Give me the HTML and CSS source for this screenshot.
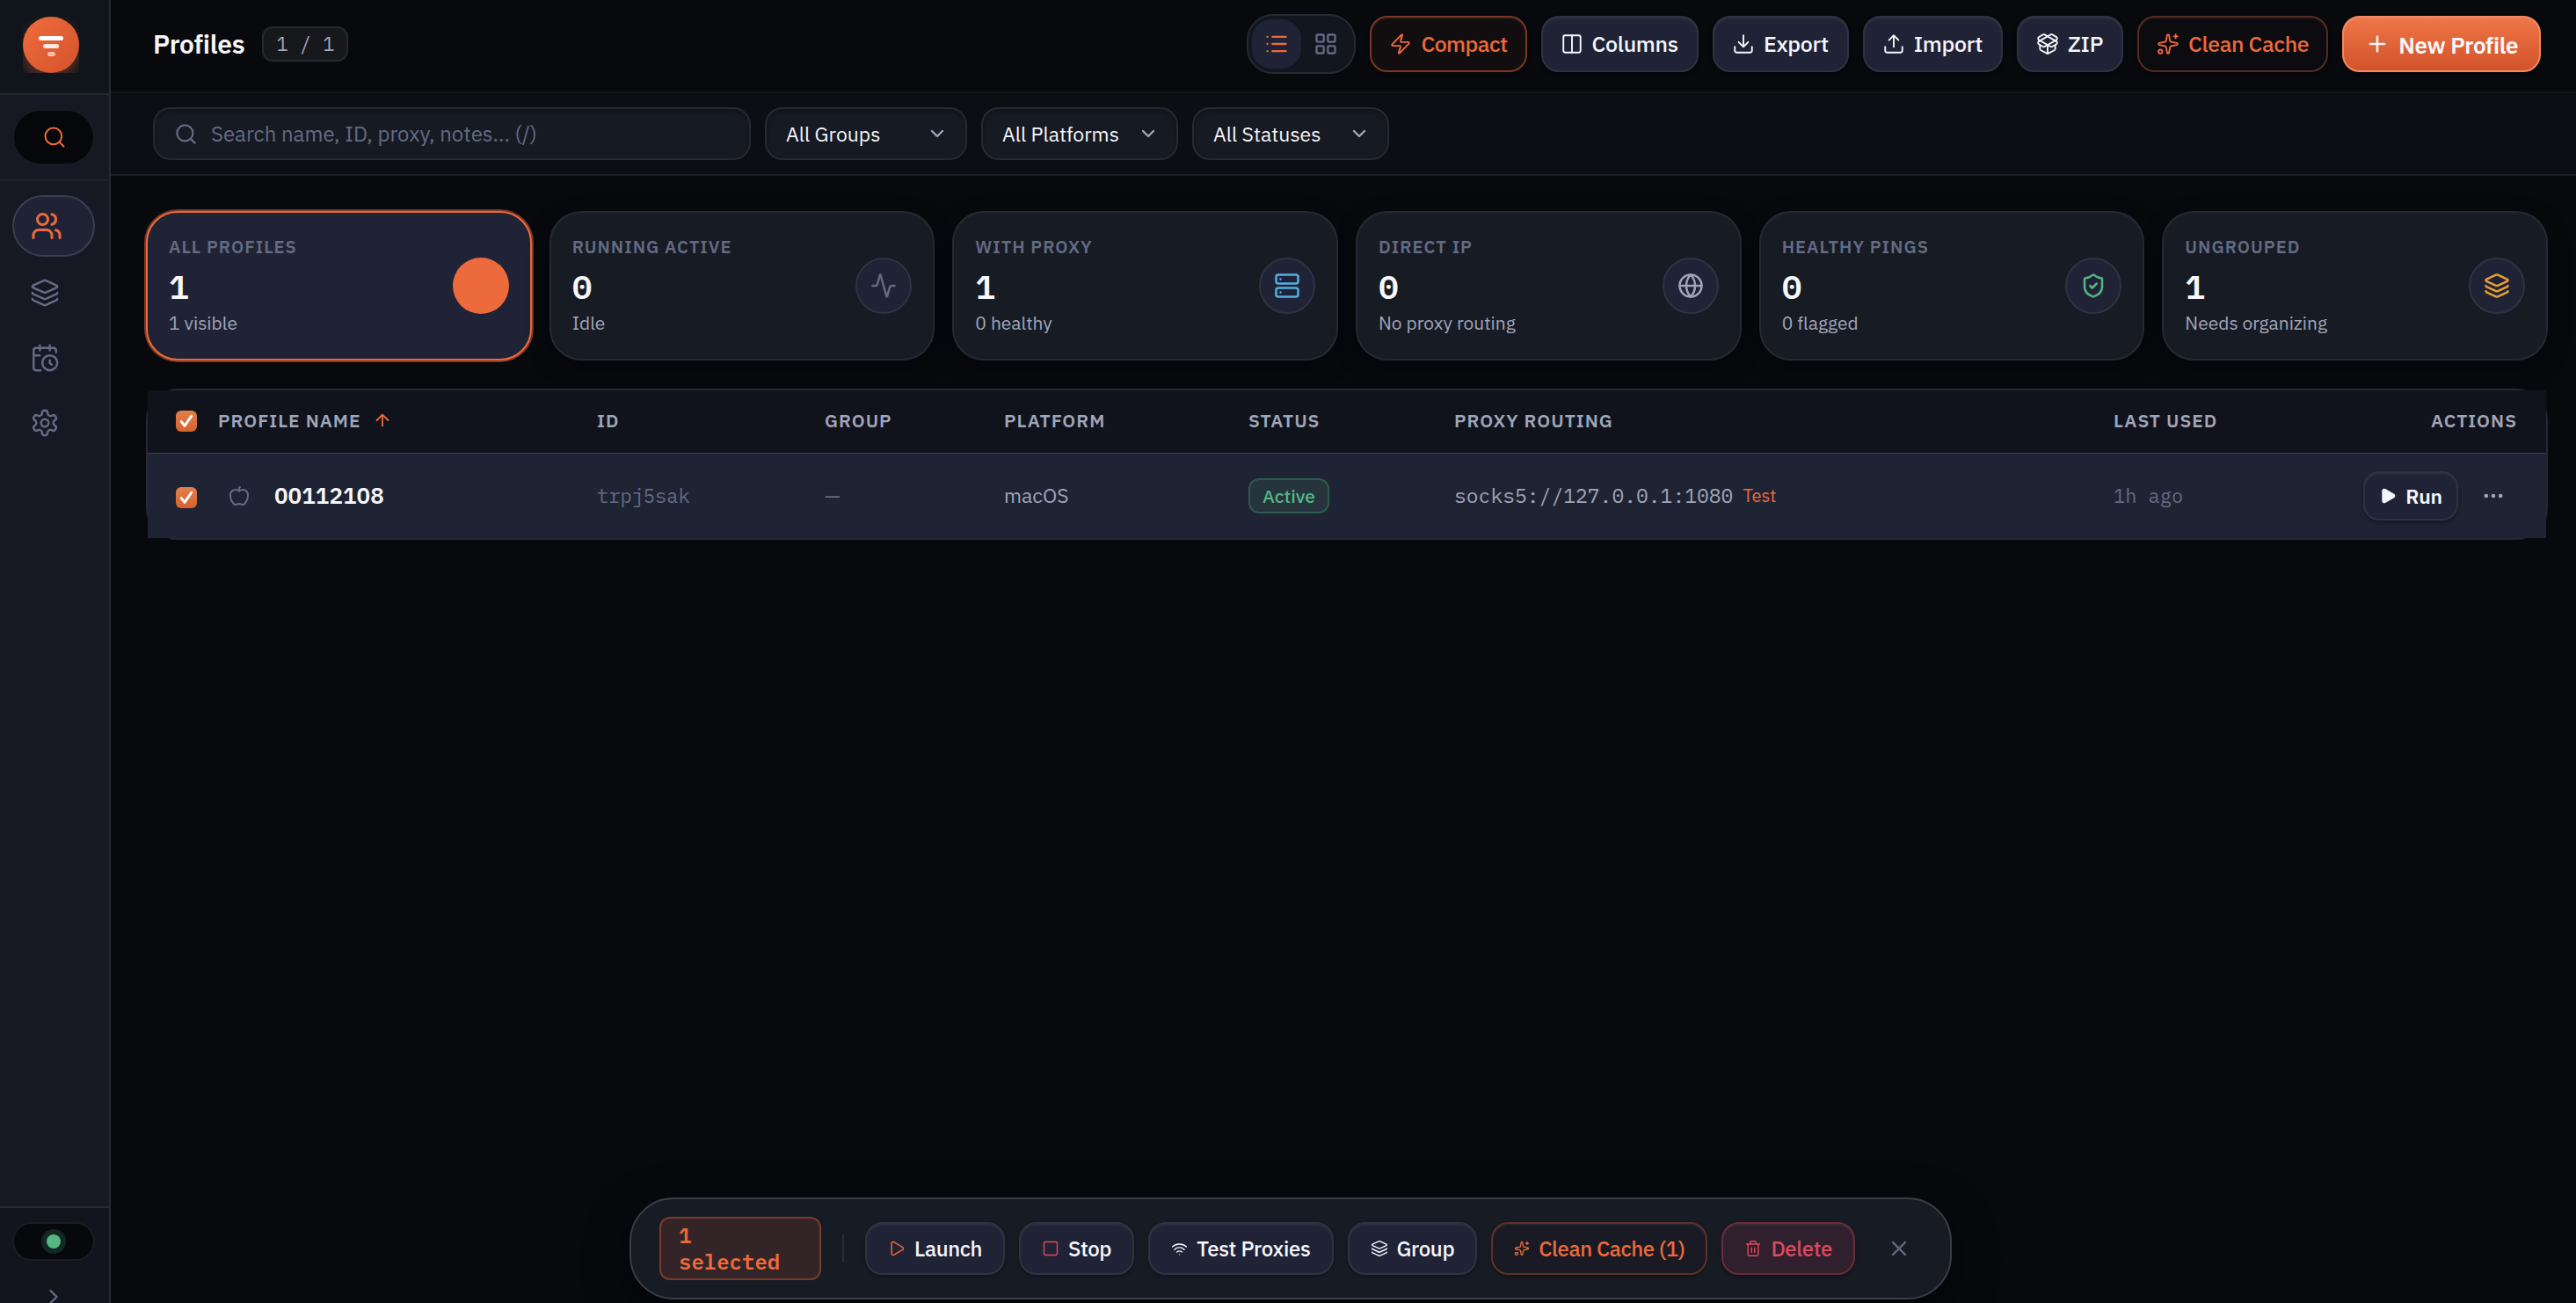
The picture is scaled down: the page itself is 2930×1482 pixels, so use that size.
FILE: index.html
```html
<!DOCTYPE html>
<html lang="en">
<head>
    <meta charset="UTF-8">
    <meta name="viewport" content="width=device-width, initial-scale=1.0">
    <title>Profiles</title>
    <link rel="stylesheet" href="styles.css">
</head>
<body>
    <!-- Shared icons -->
    <svg class="sprite" aria-hidden="true">
        <symbol id="i-search" viewBox="0 0 24 24"><circle cx="11" cy="11" r="8"/><path d="m21 21-4.3-4.3"/></symbol>
        <symbol id="i-users" viewBox="0 0 24 24"><path d="M16 21v-2a4 4 0 0 0-4-4H6a4 4 0 0 0-4 4v2"/><circle cx="9" cy="7" r="4"/><path d="M22 21v-2a4 4 0 0 0-3-3.87"/><path d="M16 3.13a4 4 0 0 1 0 7.75"/></symbol>
        <symbol id="i-layers" viewBox="0 0 24 24"><path d="M12.83 2.18a2 2 0 0 0-1.66 0L2.6 6.08a1 1 0 0 0 0 1.83l8.58 3.91a2 2 0 0 0 1.66 0l8.58-3.9a1 1 0 0 0 0-1.83z"/><path d="M2 12a1 1 0 0 0 .58.91l8.6 3.91a2 2 0 0 0 1.65 0l8.58-3.9A1 1 0 0 0 22 12"/><path d="M2 17a1 1 0 0 0 .58.91l8.6 3.91a2 2 0 0 0 1.65 0l8.58-3.9A1 1 0 0 0 22 17"/></symbol>
        <symbol id="i-calendar-clock" viewBox="0 0 24 24"><path d="M21 7.5V6a2 2 0 0 0-2-2H5a2 2 0 0 0-2 2v14a2 2 0 0 0 2 2h3.5"/><path d="M16 2v4M8 2v4M3 10h5"/><path d="M17.5 17.5 16 16.3V14"/><circle cx="16" cy="16" r="6"/></symbol>
        <symbol id="i-settings" viewBox="0 0 24 24"><path d="M12.22 2h-.44a2 2 0 0 0-2 2v.18a2 2 0 0 1-1 1.73l-.43.25a2 2 0 0 1-2 0l-.15-.08a2 2 0 0 0-2.73.73l-.22.38a2 2 0 0 0 .73 2.73l.15.1a2 2 0 0 1 1 1.72v.51a2 2 0 0 1-1 1.74l-.15.09a2 2 0 0 0-.73 2.73l.22.38a2 2 0 0 0 2.73.73l.15-.08a2 2 0 0 1 2 0l.43.25a2 2 0 0 1 1 1.73V20a2 2 0 0 0 2 2h.44a2 2 0 0 0 2-2v-.18a2 2 0 0 1 1-1.73l.43-.25a2 2 0 0 1 2 0l.15.08a2 2 0 0 0 2.73-.73l.22-.39a2 2 0 0 0-.73-2.73l-.15-.08a2 2 0 0 1-1-1.74v-.5a2 2 0 0 1 1-1.74l.15-.09a2 2 0 0 0 .73-2.73l-.22-.38a2 2 0 0 0-2.73-.73l-.15.08a2 2 0 0 1-2 0l-.43-.25a2 2 0 0 1-1-1.73V4a2 2 0 0 0-2-2z"/><circle cx="12" cy="12" r="3"/></symbol>
        <symbol id="i-chevron-right" viewBox="0 0 24 24"><path d="m9 18 6-6-6-6"/></symbol>
        <symbol id="i-chevron-down" viewBox="0 0 24 24"><path d="m6 9 6 6 6-6"/></symbol>
        <symbol id="i-list" viewBox="0 0 24 24"><path d="M3 5h.01M3 12h.01M3 19h.01M8 5h13M8 12h13M8 19h13"/></symbol>
        <symbol id="i-grid" viewBox="0 0 24 24"><rect x="3" y="3" width="7" height="7" rx="1"/><rect x="14" y="3" width="7" height="7" rx="1"/><rect x="14" y="14" width="7" height="7" rx="1"/><rect x="3" y="14" width="7" height="7" rx="1"/></symbol>
        <symbol id="i-zap" viewBox="0 0 24 24"><path d="M4 14a1 1 0 0 1-.78-1.63l9.9-10.2a.5.5 0 0 1 .86.46l-1.92 6.02A1 1 0 0 0 13 10h7a1 1 0 0 1 .78 1.63l-9.9 10.2a.5.5 0 0 1-.86-.46l1.92-6.02A1 1 0 0 0 11 14z"/></symbol>
        <symbol id="i-columns" viewBox="0 0 24 24"><rect x="3" y="3" width="18" height="18" rx="2"/><path d="M12 3v18"/></symbol>
        <symbol id="i-download" viewBox="0 0 24 24"><path d="M21 15v4a2 2 0 0 1-2 2H5a2 2 0 0 1-2-2v-4"/><path d="m7 10 5 5 5-5M12 15V3"/></symbol>
        <symbol id="i-upload" viewBox="0 0 24 24"><path d="M21 15v4a2 2 0 0 1-2 2H5a2 2 0 0 1-2-2v-4"/><path d="m17 8-5-5-5 5M12 3v12"/></symbol>
        <symbol id="i-package-open" viewBox="0 0 24 24"><path d="M12 22v-9"/><path d="M15.17 2.21a1.67 1.67 0 0 1 1.63 0L21 4.57a1.93 1.93 0 0 1 0 3.36L8.82 14.79a1.655 1.655 0 0 1-1.64 0L3 12.43a1.93 1.93 0 0 1 0-3.36z"/><path d="M20 13v3.87a2.06 2.06 0 0 1-1.11 1.83l-6 3.08a1.93 1.93 0 0 1-1.78 0l-6-3.08A2.06 2.06 0 0 1 4 16.87V13"/><path d="M21 12.43a1.93 1.93 0 0 0 0-3.36L8.83 2.2a1.64 1.64 0 0 0-1.63 0L3 4.57a1.93 1.93 0 0 0 0 3.36l12.18 6.86a1.636 1.636 0 0 0 1.63 0z"/></symbol>
        <symbol id="i-sparkles" viewBox="0 0 24 24"><path d="M11.017 2.814a1 1 0 0 1 1.966 0l1.051 5.558a2 2 0 0 0 1.594 1.594l5.558 1.051a1 1 0 0 1 0 1.966l-5.558 1.051a2 2 0 0 0-1.594 1.594l-1.051 5.558a1 1 0 0 1-1.966 0l-1.051-5.558a2 2 0 0 0-1.594-1.594l-5.558-1.051a1 1 0 0 1 0-1.966l5.558-1.051a2 2 0 0 0 1.594-1.594z"/><path d="M20 2v4M22 4h-4"/><circle cx="4" cy="20" r="2"/></symbol>
        <symbol id="i-plus" viewBox="0 0 24 24"><path d="M5 12h14M12 5v14"/></symbol>
        <symbol id="i-activity" viewBox="0 0 24 24"><path d="M22 12h-2.48a2 2 0 0 0-1.93 1.46l-2.35 8.36a.25.25 0 0 1-.48 0L9.24 2.18a.25.25 0 0 0-.48 0l-2.35 8.36A2 2 0 0 1 4.49 12H2"/></symbol>
        <symbol id="i-server" viewBox="0 0 24 24"><rect x="2" y="2" width="20" height="8" rx="2"/><rect x="2" y="14" width="20" height="8" rx="2"/><path d="M6 6h.01M6 18h.01"/></symbol>
        <symbol id="i-globe" viewBox="0 0 24 24"><circle cx="12" cy="12" r="10"/><path d="M12 2a14.5 14.5 0 0 0 0 20 14.5 14.5 0 0 0 0-20M2 12h20"/></symbol>
        <symbol id="i-shield" viewBox="0 0 24 24"><path d="M20 13c0 5-3.5 7.5-7.66 8.95a1 1 0 0 1-.67-.01C7.5 20.5 4 18 4 13V6a1 1 0 0 1 1-1c2 0 4.5-1.2 6.24-2.72a1.17 1.17 0 0 1 1.52 0C14.51 3.81 17 5 19 5a1 1 0 0 1 1 1z"/><path d="m9 12 2 2 4-4"/></symbol>
        <symbol id="i-arrow-up" viewBox="0 0 24 24"><path d="m5 12 7-7 7 7M12 19V5"/></symbol>
        <symbol id="i-apple" viewBox="0 0 24 24"><path d="M12 6.528V3a1 1 0 0 1 1-1"/><path d="M18.237 21A15 15 0 0 0 22 11a6 6 0 0 0-10-4.472A6 6 0 0 0 2 11a15.1 15.1 0 0 0 3.763 10 3 3 0 0 0 3.648.648 5.5 5.5 0 0 1 5.178 0A3 3 0 0 0 18.237 21"/></symbol>
        <symbol id="i-play" viewBox="0 0 24 24"><path d="M5 5a2 2 0 0 1 3.008-1.728l11.997 6.998a2 2 0 0 1 .003 3.458l-12 7A2 2 0 0 1 5 19z"/></symbol>
        <symbol id="i-square" viewBox="0 0 24 24"><rect x="3" y="3" width="18" height="18" rx="2"/></symbol>
        <symbol id="i-wifi" viewBox="0 0 24 24"><path d="M12 20h.01M2 8.82a15 15 0 0 1 20 0M5 12.859a10 10 0 0 1 14 0M8.5 16.429a5 5 0 0 1 7 0"/></symbol>
        <symbol id="i-trash" viewBox="0 0 24 24"><path d="M10 11v6M14 11v6M19 6v14a2 2 0 0 1-2 2H7a2 2 0 0 1-2-2V6M3 6h18M8 6V4a2 2 0 0 1 2-2h4a2 2 0 0 1 2 2v2"/></symbol>
        <symbol id="i-x" viewBox="0 0 24 24"><path d="M18 6 6 18M6 6l12 12"/></symbol>
        <symbol id="i-more" viewBox="0 0 24 24"><circle cx="5" cy="12" r="1"/><circle cx="12" cy="12" r="1"/><circle cx="19" cy="12" r="1"/></symbol>
        <symbol id="i-check" viewBox="0 0 24 24"><path d="m5 12.5 4.6 6L19 5"/></symbol>
    </svg>

    <div class="app">
        <aside class="sidebar">
            <div class="brand">
                <div class="logo-box"><div class="logo"><i></i><i></i><i></i></div></div>
            </div>
            <div class="quick-search">
                <button class="search-pill"><svg class="icon"><use href="#i-search"/></svg></button>
            </div>
            <nav class="nav">
                <a class="nav-item active"><svg class="icon"><use href="#i-users"/></svg></a>
                <a class="nav-item"><svg class="icon"><use href="#i-layers"/></svg></a>
                <a class="nav-item"><svg class="icon"><use href="#i-calendar-clock"/></svg></a>
                <a class="nav-item"><svg class="icon"><use href="#i-settings"/></svg></a>
            </nav>
            <div class="sidebar-footer">
                <div class="status-pill"><span class="status-dot"></span></div>
                <svg class="icon expand"><use href="#i-chevron-right"/></svg>
            </div>
        </aside>

        <main class="main">
            <header class="topbar">
                <h1>Profiles</h1>
                <span class="count">1 / 1</span>
                <div class="toolbar">
                    <div class="view-toggle">
                        <button class="active"><svg class="icon"><use href="#i-list"/></svg></button>
                        <button><svg class="icon"><use href="#i-grid"/></svg></button>
                    </div>
                    <button class="btn btn-tint"><svg class="icon"><use href="#i-zap"/></svg>Compact</button>
                    <button class="btn"><svg class="icon"><use href="#i-columns"/></svg>Columns</button>
                    <button class="btn"><svg class="icon"><use href="#i-download"/></svg>Export</button>
                    <button class="btn"><svg class="icon"><use href="#i-upload"/></svg>Import</button>
                    <button class="btn"><svg class="icon"><use href="#i-package-open"/></svg>ZIP</button>
                    <button class="btn btn-outline"><svg class="icon"><use href="#i-sparkles"/></svg>Clean Cache</button>
                    <button class="btn btn-primary"><svg class="icon"><use href="#i-plus"/></svg>New Profile</button>
                </div>
            </header>

            <div class="filters">
                <div class="search-box"><svg class="icon"><use href="#i-search"/></svg><span>Search name, ID, proxy, notes... (/)</span></div>
                <div class="select select-groups"><span>All Groups</span><svg class="icon"><use href="#i-chevron-down"/></svg></div>
                <div class="select"><span>All Platforms</span><svg class="icon"><use href="#i-chevron-down"/></svg></div>
                <div class="select"><span>All Statuses</span><svg class="icon"><use href="#i-chevron-down"/></svg></div>
            </div>

            <div class="content">
                <section class="stats">
                    <div class="stat selected">
                        <div><div class="label">ALL PROFILES</div><div class="value">1</div><div class="sub">1 visible</div></div>
                        <div class="stat-icon solid"></div>
                    </div>
                    <div class="stat">
                        <div><div class="label">RUNNING ACTIVE</div><div class="value">0</div><div class="sub">Idle</div></div>
                        <div class="stat-icon muted"><svg class="icon"><use href="#i-activity"/></svg></div>
                    </div>
                    <div class="stat">
                        <div><div class="label">WITH PROXY</div><div class="value">1</div><div class="sub">0 healthy</div></div>
                        <div class="stat-icon blue"><svg class="icon"><use href="#i-server"/></svg></div>
                    </div>
                    <div class="stat">
                        <div><div class="label">DIRECT IP</div><div class="value">0</div><div class="sub">No proxy routing</div></div>
                        <div class="stat-icon"><svg class="icon"><use href="#i-globe"/></svg></div>
                    </div>
                    <div class="stat">
                        <div><div class="label">HEALTHY PINGS</div><div class="value">0</div><div class="sub">0 flagged</div></div>
                        <div class="stat-icon green"><svg class="icon"><use href="#i-shield"/></svg></div>
                    </div>
                    <div class="stat">
                        <div><div class="label">UNGROUPED</div><div class="value">1</div><div class="sub">Needs organizing</div></div>
                        <div class="stat-icon amber"><svg class="icon"><use href="#i-layers"/></svg></div>
                    </div>
                </section>

                <section class="table">
                    <div class="row head">
                        <span class="checkbox"><svg class="icon"><use href="#i-check"/></svg></span>
                        <span class="sortable">PROFILE NAME<svg class="icon"><use href="#i-arrow-up"/></svg></span>
                        <span>ID</span>
                        <span>GROUP</span>
                        <span>PLATFORM</span>
                        <span>STATUS</span>
                        <span>PROXY ROUTING</span>
                        <span>LAST USED</span>
                        <span class="right">ACTIONS</span>
                    </div>
                    <div class="row body">
                        <span class="checkbox"><svg class="icon"><use href="#i-check"/></svg></span>
                        <span class="profile"><span class="os"><svg class="icon"><use href="#i-apple"/></svg></span>00112108</span>
                        <span class="mono dim">trpj5sak</span>
                        <span class="dim">—</span>
                        <span>macOS</span>
                        <span><span class="badge">Active</span></span>
                        <span class="proxy"><span class="mono">socks5://127.0.0.1:1080</span><a>Test</a></span>
                        <span class="mono dim">1h ago</span>
                        <span class="actions"><button class="run"><svg class="icon"><use href="#i-play"/></svg>Run</button><svg class="icon more"><use href="#i-more"/></svg></span>
                    </div>
                </section>
            </div>
        </main>
    </div>

    <div class="bulk-bar">
        <div class="selected-count">1 selected</div>
        <div class="divider"></div>
        <button class="btn btn-sm launch"><svg class="icon"><use href="#i-play"/></svg>Launch</button>
        <button class="btn btn-sm stop"><svg class="icon"><use href="#i-square"/></svg>Stop</button>
        <button class="btn btn-sm proxies"><svg class="icon"><use href="#i-wifi"/></svg>Test Proxies</button>
        <button class="btn btn-sm"><svg class="icon"><use href="#i-layers"/></svg>Group</button>
        <button class="btn btn-sm btn-outline"><svg class="icon"><use href="#i-sparkles"/></svg>Clean Cache (1)</button>
        <button class="btn btn-sm btn-danger"><svg class="icon"><use href="#i-trash"/></svg>Delete</button>
        <svg class="icon close"><use href="#i-x"/></svg>
    </div>
</body>
</html>
```
FILE: styles.css
```css
:root {
    --bg: #08090d;
    --surface: #171b24;
    --raised: #1f2335;
    --line: #262932;
    --line-strong: #2e3342;
    --text: #f6f7fb;
    --text-2: #a0a5ba;
    --text-3: #636b84;
    --accent: #ec6a3c;
    --green: #55b685;
    --red: #dc4a60;
    --mono: 'IBM Plex Mono', 'Liberation Mono', monospace;
}
* {
    box-sizing: border-box;
}
body {
    margin: 0;
    height: 1482px;
    overflow: hidden;
    background: var(--bg);
    color: var(--text);
    font-family: 'IBM Plex Sans', Roboto, sans-serif;
    font-size: 24px;
    line-height: 1.3;
}
button {
    font-family: inherit;
    padding: 0;
    border: none;
}
.sprite {
    display: none;
}
.icon {
    width: 28px;
    height: 28px;
    flex: none;
    fill: none;
    stroke: currentColor;
    stroke-width: 2;
    stroke-linecap: round;
    stroke-linejoin: round;
}
.app {
    display: flex;
    height: 100%;
}

/* Sidebar */
.sidebar {
    width: 126px;
    flex: none;
    display: flex;
    flex-direction: column;
    background: #161923;
    border-right: 2px solid #262832;
}
.brand {
    height: 108px;
    padding: 19px 0 0 26px;
    background: #10141b;
    border-bottom: 2px solid #22262e;
}
.logo-box {
    width: 64px;
    height: 64px;
    overflow: hidden;
}
.logo {
    height: 64px;
    padding-top: 2px;
    border-radius: 50%;
    display: flex;
    flex-direction: column;
    align-items: center;
    justify-content: center;
    gap: 4px;
    background: linear-gradient(135deg, #ef6c3e, #d4532b);
    box-shadow: 0 8px 16px rgba(236, 106, 60, 0.35);
}
.logo i {
    width: 28px;
    height: 5px;
    border-radius: 3px;
    background: #fff;
}
.logo i:nth-child(2) {
    width: 18px;
    opacity: 0.85;
}
.logo i:nth-child(3) {
    width: 9px;
    opacity: 0.6;
}
.quick-search {
    height: 98px;
    padding: 16px 16px 0 14px;
    border-bottom: 2px solid #1e212b;
}
.search-pill {
    width: 94px;
    height: 64px;
    padding-left: 2px;
    border-radius: 32px;
    border: 2px solid #191b20;
    background: #06070a;
    color: var(--accent);
    display: flex;
    align-items: center;
    justify-content: center;
}
.search-pill .icon {
    stroke-width: 1.75;
}
.nav {
    flex: 1;
    display: flex;
    flex-direction: column;
    gap: 4px;
    padding: 16px 16px 0 14px;
}
.nav-item {
    height: 70px;
    border-radius: 35px;
    border: 2px solid transparent;
    padding-left: 18px;
    display: flex;
    align-items: center;
    color: var(--text-3);
}
.nav-item .icon {
    width: 34px;
    height: 34px;
    stroke-width: 1.75;
}
.nav-item.active {
    margin-bottom: 2px;
    padding-left: 19px;
    background: var(--raised);
    border-color: #393e4d;
    color: var(--accent);
}
.nav-item.active .icon {
    width: 36px;
    height: 36px;
    stroke-width: 2;
}
.sidebar-footer {
    height: 110px;
    padding: 16px 16px 0 14px;
    background: #12151d;
    border-top: 2px solid #262832;
    display: flex;
    flex-direction: column;
    align-items: center;
}
.status-pill {
    width: 94px;
    height: 44px;
    flex: none;
    border-radius: 22px;
    border: 2px solid #1b1d21;
    background: #07080b;
    display: flex;
    align-items: center;
    justify-content: center;
}
.status-dot {
    width: 16px;
    height: 16px;
    border-radius: 50%;
    background: var(--green);
    box-shadow: 0 0 0 6px rgba(85, 182, 133, 0.18);
}
.expand {
    margin-top: 27px;
    color: var(--text-3);
}

/* Header */
.main {
    flex: 1;
    min-width: 0;
}
.topbar {
    height: 106px;
    padding: 0 40px 4px 48px;
    border-bottom: 2px solid #15171c;
    display: flex;
    align-items: center;
}
h1 {
    margin: -2px 20px 0 0;
    font-size: 30px;
    font-weight: 600;
    letter-spacing: -0.3px;
}
.count {
    height: 40px;
    padding: 0 14px;
    border: 2px solid #26292e;
    border-radius: 12px;
    background: #16181b;
    color: var(--text-2);
    font: 22px/35px var(--mono);
}
.toolbar {
    margin-left: auto;
    display: flex;
    align-items: center;
    gap: 16px;
}
.view-toggle {
    width: 124px;
    height: 68px;
    padding: 4px;
    border: 2px solid var(--line);
    border-radius: 30px;
    background: #12161e;
    display: flex;
}
.view-toggle button {
    width: 56px;
    height: 56px;
    border-radius: 22px;
    background: none;
    color: var(--text-3);
    display: flex;
    align-items: center;
    justify-content: center;
}
.view-toggle .active {
    background: var(--raised);
    color: var(--accent);
}
.btn {
    height: 64px;
    padding: 0 21px 1px 20px;
    border: 2px solid var(--line-strong);
    border-radius: 20px;
    background: var(--raised);
    color: var(--text);
    font-size: 25px;
    font-weight: 500;
    letter-spacing: -0.3px;
    white-space: nowrap;
    display: flex;
    align-items: center;
    gap: 10px;
    box-shadow: inset 0 2px 1px rgba(255, 255, 255, 0.05), 0 2px 4px rgba(0, 0, 0, 0.3);
}
.btn .icon {
    width: 26px;
    height: 26px;
    stroke-width: 1.75;
}
.btn-tint {
    padding-right: 20px;
    background: #120e10;
    border-color: #7a3722;
    color: var(--accent);
    letter-spacing: -0.6px;
}
.btn-outline {
    padding-right: 20px;
    background: #0c0b10;
    border-color: #542b20;
    color: var(--accent);
    letter-spacing: -0.4px;
}
.btn-primary {
    padding: 1px 24px 0;
    border-color: #f08a64;
    background: linear-gradient(#ee7648, #d2532a);
    font-size: 26px;
    font-weight: 600;
    letter-spacing: -0.4px;
}
.btn-primary .icon {
    width: 28px;
    height: 28px;
    margin-top: -2px;
    stroke-width: 2.2;
}

/* Filters */
.filters {
    height: 94px;
    padding: 0 48px;
    background: #0c0e13;
    border-bottom: 2px solid #1b1d21;
    display: flex;
    align-items: center;
    gap: 16px;
}
.search-box,
.select {
    height: 60px;
    border: 2px solid var(--line);
    border-radius: 20px;
    background: #161a23;
    box-shadow: inset 0 3px 5px rgba(0, 0, 0, 0.25);
    display: flex;
    align-items: center;
}
.search-box span,
.select span {
    padding-top: 2px;
}
.search-box {
    width: 680px;
    padding-left: 22px;
    gap: 15px;
    color: var(--text-3);
}
.search-box .icon {
    width: 27px;
    height: 27px;
}
.select {
    width: 224px;
    padding: 0 20px 0 22px;
    justify-content: space-between;
    font-size: 23px;
}
.select .icon {
    width: 24px;
    height: 24px;
    stroke-width: 2.4;
    color: var(--text-2);
}
.select-groups {
    width: 230px;
}

/* Stat cards */
.content {
    padding: 40px 32px 0 40px;
}
.stats {
    display: grid;
    grid-template-columns: repeat(6, 1fr);
    gap: 20px;
}
.stat {
    height: 170px;
    padding: 0 24px;
    border: 2px solid var(--line);
    border-radius: 36px;
    background: var(--surface);
    display: flex;
    align-items: center;
    justify-content: space-between;
    box-shadow: inset 0 2px 1px rgba(255, 255, 255, 0.02), 0 8px 24px rgba(0, 0, 0, 0.35);
}
.stat.selected {
    background: var(--raised);
    border-color: var(--accent);
    box-shadow: 0 0 0 2px rgba(236, 106, 60, 0.5);
}
.label {
    color: var(--text-3);
    font-size: 20px;
    font-weight: 600;
    letter-spacing: 1px;
    line-height: 26px;
}
.value {
    margin-top: 10px;
    font: 600 38px/44px var(--mono);
}
.sub {
    margin-top: 6px;
    padding-bottom: 2px;
    color: var(--text-2);
    font-size: 21px;
    line-height: 26px;
}
.stat-icon {
    width: 64px;
    height: 64px;
    border-radius: 50%;
    border: 2px solid var(--line-strong);
    background: var(--raised);
    color: var(--text-2);
    display: flex;
    align-items: center;
    justify-content: center;
}
.stat-icon .icon {
    width: 30px;
    height: 30px;
}
.stat-icon.solid {
    border: none;
    background: var(--accent);
}
.stat-icon.muted {
    color: var(--text-3);
}
.stat-icon.blue {
    color: #55aee6;
}
.stat-icon.green {
    color: var(--green);
}
.stat-icon.amber {
    color: #e9a035;
}

/* Table */
.table {
    margin-top: 32px;
    border: 2px solid var(--line);
    border-radius: 36px;
}
.row {
    display: grid;
    grid-template-columns: 48px 431px 259px 204px 278px 234px 750px 160px 1fr;
    align-items: center;
    padding: 0 33px 0 32px;
}
.head {
    height: 72px;
    padding-bottom: 2px;
    background: #10131b;
    border-bottom: 1px solid #3c3f50;
    color: var(--text-2);
    font-size: 21px;
    font-weight: 600;
    letter-spacing: 1px;
}
.body {
    height: 96px;
    background: #1f2434;
    color: var(--text-2);
    font-size: 23px;
}
.checkbox {
    width: 24px;
    height: 24px;
    border-radius: 6px;
    background: linear-gradient(#e37f49, #d5622f);
    color: #fff;
    display: flex;
    align-items: center;
    justify-content: center;
}
.body .checkbox {
    margin-top: 3px;
}
.checkbox .icon {
    width: 20px;
    height: 20px;
    stroke-width: 3.4;
}
.sortable {
    display: flex;
    align-items: center;
    gap: 13px;
}
.sortable .icon {
    width: 22px;
    height: 22px;
    color: var(--accent);
}
.right {
    text-align: right;
}
.mono {
    font-family: var(--mono);
    font-size: 22px;
}
.dim {
    color: var(--text-3);
}
.profile {
    display: flex;
    align-items: center;
    gap: 16px;
    color: var(--text);
    font-size: 26px;
    font-weight: 600;
}
.os {
    width: 48px;
    height: 48px;
    border-radius: 16px;
    background: #1f2335;
    color: var(--text-3);
    display: flex;
    align-items: center;
    justify-content: center;
}
.os .icon {
    width: 24px;
    height: 24px;
}
.badge {
    display: inline-block;
    height: 40px;
    padding: 0 14px;
    border: 2px solid #2d5a4e;
    border-radius: 12px;
    background: #25343d;
    color: var(--green);
    font-size: 21px;
    font-weight: 500;
    line-height: 36px;
}
.proxy {
    display: flex;
    align-items: center;
    gap: 11px;
}
.proxy .mono {
    font-size: 23px;
}
.proxy a {
    color: var(--accent);
    font-size: 20px;
}
.actions {
    display: flex;
    align-items: center;
    justify-content: flex-end;
}
.run {
    width: 108px;
    height: 56px;
    border: 2px solid var(--line-strong);
    border-radius: 18px;
    background: var(--raised);
    color: var(--text);
    font-size: 23px;
    font-weight: 600;
    letter-spacing: -0.3px;
    display: flex;
    align-items: center;
    justify-content: center;
    gap: 10px;
    box-shadow: inset 0 2px 1px rgba(255, 255, 255, 0.04), 0 3px 5px rgba(0, 0, 0, 0.3);
}
.run .icon {
    width: 20px;
    height: 20px;
    fill: currentColor;
}
.more {
    margin: 0 13px 0 26px;
    fill: currentColor;
}

/* Bulk actions, floats over the page */
.bulk-bar {
    position: absolute;
    left: 716px;
    bottom: 4px;
    width: 1504px;
    height: 116px;
    padding: 0 32px;
    border: 2px solid #3a3d46;
    border-radius: 50px;
    background: #171b24;
    display: flex;
    align-items: center;
    gap: 16px;
    box-shadow: 0 16px 48px rgba(0, 0, 0, 0.5);
}
.selected-count {
    width: 184px;
    height: 72px;
    padding: 4px 60px 0 20px;
    border: 2px solid #7a3b29;
    border-radius: 12px;
    background: #322427;
    color: var(--accent);
    font: 600 24px/30px var(--mono);
}
.divider {
    width: 2px;
    height: 32px;
    margin: 0 8px;
    background: #272b35;
}
.btn-sm {
    height: 60px;
    padding: 0 24px;
    font-size: 24px;
    letter-spacing: -0.4px;
}
.btn-sm .icon {
    width: 20px;
    height: 20px;
}
.btn-sm.proxies {
    letter-spacing: -0.3px;
}
.btn-sm.proxies .icon {
    width: 19px;
    height: 19px;
}
.btn-sm.btn-outline {
    background: #191a23;
    border-color: #5f3227;
}
.btn-sm.btn-outline .icon {
    width: 18px;
    height: 18px;
}
.launch .icon {
    color: var(--accent);
}
.stop .icon {
    color: var(--red);
}
.btn-danger {
    background: #301f2c;
    border-color: #6b2c3a;
    color: var(--red);
}
.close {
    margin-left: auto;
    margin-right: 12px;
    color: var(--text-3);
}
```
